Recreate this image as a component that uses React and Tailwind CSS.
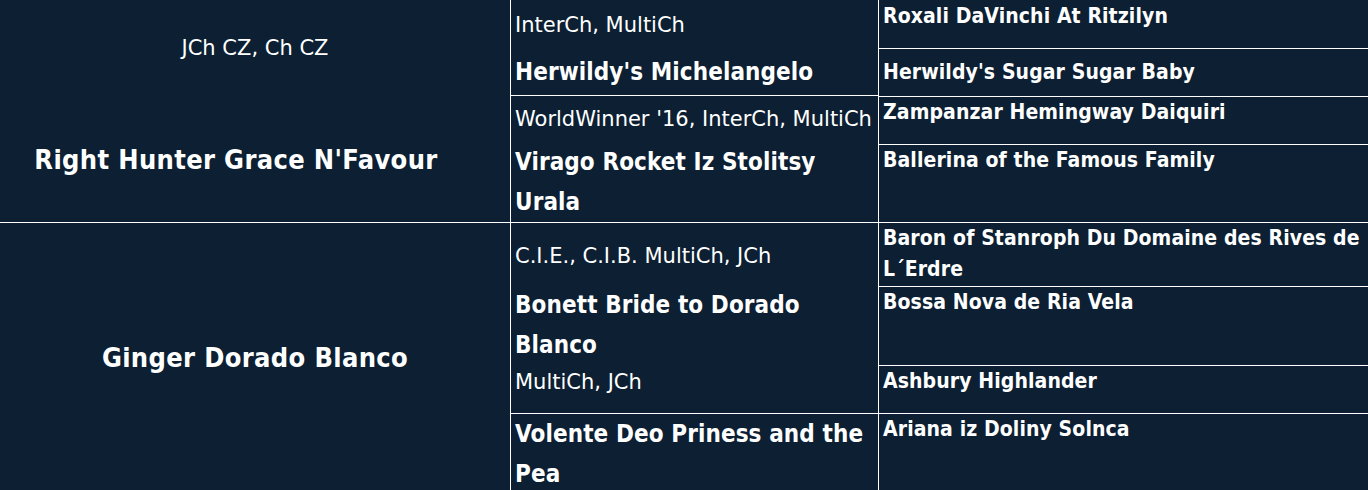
const font = { fontFamily: '"DejaVu Sans Condensed", "DejaVu Sans", sans-serif' };

const Title = ({ children, className = '' }) => (
  <div
    className={`text-[21px] leading-[30px] whitespace-nowrap font-['DejaVu_Sans',sans-serif] ${className}`}
  >
    {children}
  </div>
);

const Name = ({ children, className = '' }) => (
  <div className={`text-[24px] leading-[40px] font-bold tracking-[0.1px] ${className}`}>{children}</div>
);

const Ancestor = ({ children, className = '' }) => (
  <div className={`px-1 text-[21px] leading-[31px] font-bold tracking-[0.1px] ${className}`}>{children}</div>
);

export default function App() {
  return (
    <div className="h-[490px] w-[1368px] overflow-hidden bg-[#0c1f33] text-white" style={font}>
      {/* sire side */}
      <div className="flex h-[223px] border-b border-white">
        <div className="w-[511px] border-r border-white text-center">
          <Title className="pt-[33px]">JCh CZ, Ch CZ</Title>
          <div className="mt-[77px] pr-[38px] text-[27px] leading-[40px] font-bold tracking-[0.35px]">
            Right Hunter Grace N'Favour
          </div>
        </div>
        <div className="flex w-[368px] flex-col border-r border-white">
          <div className="h-[97px] border-b border-white px-1 pt-[10px]">
            <Title>InterCh, MultiCh</Title>
            <Name className="mt-[12px]">Herwildy's Michelangelo</Name>
          </div>
          <div className="flex-1 px-1 pt-[8px]">
            <Title>WorldWinner '16, InterCh, MultiCh</Title>
            <Name className="mt-[8px]">Virago Rocket Iz Stolitsy Urala</Name>
          </div>
        </div>
        <div className="flex flex-1 flex-col">
          <Ancestor className="h-[49px] border-b border-white pt-[1px]">Roxali DaVinchi At Ritzilyn</Ancestor>
          <Ancestor className="h-[48px] border-b border-white pt-[8px]">Herwildy's Sugar Sugar Baby</Ancestor>
          <Ancestor className="h-[48px] border-b border-white">Zampanzar Hemingway Daiquiri</Ancestor>
          <Ancestor className="flex-1">Ballerina of the Famous Family</Ancestor>
        </div>
      </div>

      {/* dam side */}
      <div className="flex h-[280px]">
        <div className="w-[511px] border-r border-white text-center">
          <div className="pt-[115px] text-[27px] leading-[40px] font-bold tracking-[0.35px]">Ginger Dorado Blanco</div>
        </div>
        <div className="flex w-[368px] flex-col border-r border-white">
          <div className="h-[191px] border-b border-white px-1 pt-[18px]">
            <Title>C.I.E., C.I.B. MultiCh, JCh</Title>
            <Name className="mt-[14px]">Bonett Bride to Dorado Blanco</Name>
            <Title className="mt-[2px]">MultiCh, JCh</Title>
          </div>
          <div className="flex-1 px-1">
            <Name>Volente Deo Priness and the Pea</Name>
          </div>
        </div>
        <div className="flex flex-1 flex-col">
          <Ancestor className="h-[64px] border-b border-white">
            Baron of Stanroph Du Domaine des Rives de <span className="whitespace-nowrap">L´Erdre</span>
          </Ancestor>
          <Ancestor className="h-[79px] border-b border-white">Bossa Nova de Ria Vela</Ancestor>
          <Ancestor className="h-[48px] border-b border-white">Ashbury Highlander</Ancestor>
          <Ancestor className="flex-1">Ariana iz Doliny Solnca</Ancestor>
        </div>
      </div>
    </div>
  );
}
